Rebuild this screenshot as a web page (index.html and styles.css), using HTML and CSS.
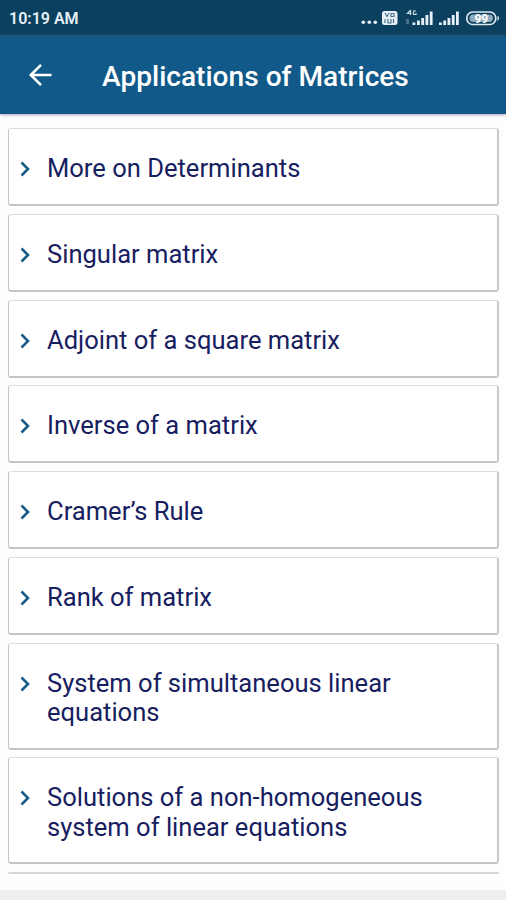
FILE: index.html
```html
<!DOCTYPE html>
<html lang="en">
<head>
<meta charset="utf-8">
<title>Applications of Matrices</title>
<link rel="stylesheet" href="styles.css">
</head>
<body>
<div class="screen">
  <div class="status">
    <span class="time">10:19 AM</span>
    <svg class="status-icons" width="142" height="20" viewBox="0 0 142 20" fill="#e6f0f6">
      <circle cx="3.3" cy="13.2" r="1.8"/><circle cx="9.3" cy="13.2" r="1.8"/><circle cx="15.3" cy="13.2" r="1.8"/>
      <rect x="22" y="2" width="15.500" height="14" rx="2.500"/>
      <path d="M25 4l2 3.500 2-3.500M31 7.500v-3h3v3zM25 10v4M28 10v4h3v-4M33.500 10v4" fill="none" stroke="#4d7590" stroke-width="1.200"/>
      <path d="M50.500 1l-3 3.500h4M50.500 1v5M56 2h-2.500v3.500H56V4" fill="none" stroke="#c9dbe6" stroke-width="1.200"/>
      <path d="M46 10h3v5h-3z" fill="#47718a"/>
      <path d="M52.500 13.500h2.800V16h-2.800zM57 11.500h2.800V16H57zM61.300 9h2.800v7h-2.800zM65.500 6h2.800v10h-2.800zM69.800 2.500h2.800V16h-2.800z"/>
      <path d="M79 13.500h2.800V16H79zM83.300 11.500h2.800V16h-2.800zM87.500 9h2.800v7h-2.800zM91.800 6h2.800v10h-2.800zM96 2.500h2.800V16H96z"/>
      <rect x="106.800" y="3" width="29" height="12.500" rx="6" fill="none" stroke="#dce9f0" stroke-width="1.700"/>
      <rect x="109.500" y="5.500" width="23.500" height="7.500" rx="3.700" fill="#8eabbc"/>
      <path d="M137.500 6.500q3 2.700 0 5.500z"/>
      <text class="battery" x="121.300" y="13.500" text-anchor="middle">99</text>
    </svg>
  </div>
  <header class="appbar">
    <svg class="back" width="24" height="24" viewBox="0 0 24 24" fill="none" stroke="#fff" stroke-width="2.600"><path d="M23.500 12H3M13 1.800L2.800 12 13 22.200"/></svg>
    <h1>Applications of Matrices</h1>
  </header>
  <main class="list">
    <div class="card"><svg class="chev" viewBox="0 0 10 16"><path d="M1.500 1.500L8 8l-6.500 6.500"/></svg><p>More on Determinants</p></div>
    <div class="card"><svg class="chev" viewBox="0 0 10 16"><path d="M1.500 1.500L8 8l-6.500 6.500"/></svg><p>Singular matrix</p></div>
    <div class="card"><svg class="chev" viewBox="0 0 10 16"><path d="M1.500 1.500L8 8l-6.500 6.500"/></svg><p>Adjoint of a square matrix</p></div>
    <div class="card"><svg class="chev" viewBox="0 0 10 16"><path d="M1.500 1.500L8 8l-6.500 6.500"/></svg><p>Inverse of a matrix</p></div>
    <div class="card"><svg class="chev" viewBox="0 0 10 16"><path d="M1.500 1.500L8 8l-6.500 6.500"/></svg><p>Cramer’s Rule</p></div>
    <div class="card"><svg class="chev" viewBox="0 0 10 16"><path d="M1.500 1.500L8 8l-6.500 6.500"/></svg><p>Rank of matrix</p></div>
    <div class="card tall"><svg class="chev" viewBox="0 0 10 16"><path d="M1.500 1.500L8 8l-6.500 6.500"/></svg><p>System of simultaneous linear<br>equations</p></div>
    <div class="card tall"><svg class="chev" viewBox="0 0 10 16"><path d="M1.500 1.500L8 8l-6.500 6.500"/></svg><p>Solutions of a non-homogeneous<br>system of linear equations</p></div>
    <div class="card cut"></div>
  </main>
  <div class="footer"></div>
</div>
</body>
</html>
```
FILE: styles.css
```css
body {
  margin: 0;
  font-family: Roboto, "Liberation Sans", sans-serif;
}
.screen {
  width: 506px;
  height: 900px;
  display: flex;
  flex-direction: column;
  overflow: hidden;
  background: #fefefe;
}
.status {
  height: 36px;
  flex: none;
  box-sizing: border-box;
  padding: 0 4px 0 9px;
  display: flex;
  align-items: center;
  justify-content: space-between;
  background: #0c405f;
  color: #e6f0f6;
}
.status-icons {
  margin-top: 2px;
}
.time {
  font-size: 16px;
  font-weight: 600;
  padding-top: 1px;
}
.battery {
  font-size: 12px;
  font-weight: 700;
  fill: #fff;
}
.appbar {
  height: 78px;
  flex: none;
  display: flex;
  align-items: center;
  padding-left: 28px;
  background: #115989;
  box-shadow: 0 1px 3px #a9a5b8;
}
.back {
  margin-top: -1px;
}
h1 {
  margin: 4px 0 0 50px;
  font-size: 28.100px;
  font-weight: 500;
  line-height: 32px;
  color: #fff;
  white-space: nowrap;
}
.list {
  flex: 1;
  min-height: 0;
  overflow: hidden;
  padding: 14px 7px 0 8px;
  display: flex;
  flex-direction: column;
  gap: 7.800px;
}
.card {
  height: 78px;
  flex: none;
  box-sizing: border-box;
  display: flex;
  align-items: flex-start;
  padding: 25px 0 0 11px;
  border: 1px solid #c6c6c6;
  border-top-color: #dedede;
  border-right: 2px solid #c8c8c8;
  border-bottom: 2px solid #c4c4c4;
  border-radius: 3px;
  background: #fff;
}
.tall {
  height: 106.800px;
}
.cut {
  height: 2px;
  padding: 0;
  border-top: 2px solid #d6d6d6;
  border-bottom: 0;
  border-radius: 3px 3px 0 0;
}
.chev {
  width: 10px;
  height: 16px;
  margin-top: 7px;
  fill: none;
  stroke: #1b5c88;
  stroke-width: 2.600;
}
p {
  margin: 0 0 0 17px;
  font-size: 25.550px;
  line-height: 29.500px;
  color: #17205f;
  white-space: nowrap;
}
.footer {
  height: 10px;
  flex: none;
  background: #eee;
}
```
